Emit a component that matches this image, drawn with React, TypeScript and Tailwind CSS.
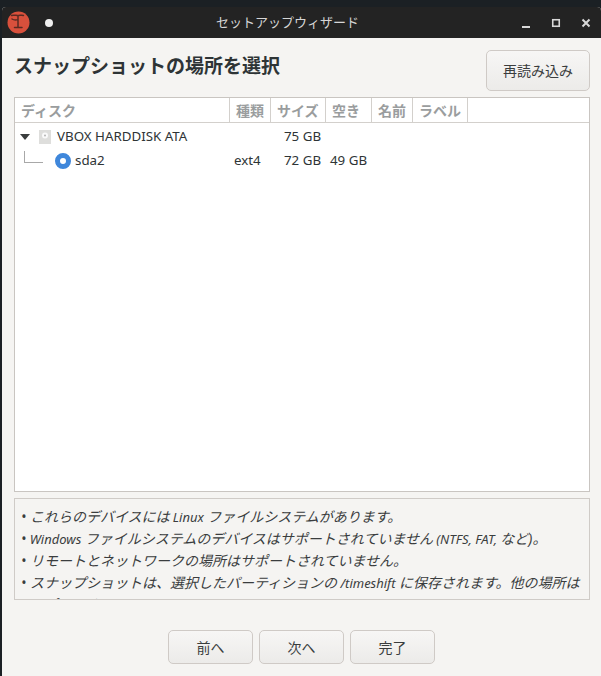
import React from "react";

const FONT = "font-['Noto_Sans','Noto_Sans_CJK_JP',sans-serif]";

const cols = [
  { label: "ディスク", w: "w-[215px]" },
  { label: "種類", w: "w-[41px]" },
  { label: "サイズ", w: "w-[55px]" },
  { label: "空き", w: "w-[46px]" },
  { label: "名前", w: "w-[41px]" },
  { label: "ラベル", w: "w-[55px]" },
];

function L({ children }: { children: React.ReactNode }) {
  return <span className="text-[13px]">{children}</span>;
}

function Line({ children, indent }: { children: React.ReactNode; indent?: boolean }) {
  return (
    <div className={`h-[22px] whitespace-nowrap leading-[22px] ${indent ? "pl-[9px]" : ""}`}>{children}</div>
  );
}

function FooterButton({ label }: { label: string }) {
  return (
    <button className="w-[85px] h-[34px] rounded-[5px] border border-[#cfcac6] bg-gradient-to-b from-[#f7f6f5] to-[#ecebe9] text-[14px] text-[#3a3d3e]">
      {label}
    </button>
  );
}

export default function App() {
  return (
    <div className={`${FONT} w-[601px] h-[676px] overflow-hidden bg-[#1b2024] pt-[7px] pl-[2px]`}>
      <div className="flex h-[669px] w-[599px] flex-col overflow-hidden rounded-t-[4px] bg-[#f5f4f2]">
        <div className="relative flex h-[31px] shrink-0 items-center bg-[#232323] pl-[5px] pr-[9px]">
          <svg width="23" height="23" viewBox="0 0 23 23" className="shrink-0">
            <circle cx="11.5" cy="11.5" r="11" fill="#d9503c" />
            <path d="M4.5 4.5c2-.8 4.5 0 6.5 0s3.5-.8 5.5 0M11 4.5v12M7.5 16.5h7.5M5 8c1.5 1 4 1.2 6 .6" stroke="#5a2a22" strokeWidth="1.5" fill="none" strokeLinecap="round" />
          </svg>
          <span className="ml-[15px] size-[8px] rounded-full bg-[#eeeeee]" />
          <span className="absolute left-[214px] top-[6px] text-[13px] leading-[19px] text-[#d6d6d6]">
            セットアップウィザード
          </span>
          <div className="ml-auto flex items-center gap-[18px] text-[#d8d8d8]">
            <svg width="12" height="12" viewBox="0 0 12 12"><rect x="2" y="9" width="8" height="2" fill="currentColor" /></svg>
            <svg width="12" height="12" viewBox="0 0 12 12"><rect x="2.75" y="2.75" width="6.5" height="6.5" fill="none" stroke="currentColor" strokeWidth="1.6" /></svg>
            <svg width="12" height="12" viewBox="0 0 12 12"><path d="M2.5 2.5l7 7M9.5 2.5l-7 7" stroke="currentColor" strokeWidth="2" /></svg>
          </div>
        </div>

        <div className="flex min-h-0 flex-1 flex-col pl-[12px] pr-[11px]">
          <div className="flex h-[53px] shrink-0 items-end justify-between">
            <h1 className="mb-[11px] text-[19px] font-bold leading-[28px] text-[#2e3436]">スナップショットの場所を選択</h1>
            <button className="h-[41px] w-[104px] rounded-[5px] border border-[#cfcac6] bg-gradient-to-b from-[#f7f6f5] to-[#ecebe9] text-[14px] text-[#3a3d3e]">
              再読み込み
            </button>
          </div>

          <div className="mt-[6px] h-[395px] shrink-0 border border-[#c9c5c1] bg-white">
            <div className="flex h-[25px] border-b border-[#d3d0cc]">
              {cols.map((c) => (
                <div key={c.label} className={`${c.w} shrink-0 border-r border-[#d3d0cc] pl-[6px] text-[14px] font-bold leading-[25px] text-[#9a9d9e]`}>
                  {c.label}
                </div>
              ))}
            </div>
            <div className="flex h-[26px] items-center pt-[2px] text-[13.33px] text-[#2e3436]">
              <div className="flex w-[219px] shrink-0 items-center">
                <svg width="10" height="6" viewBox="0 0 10 6" className="ml-[5px]"><path d="M0 0h10L5 6z" fill="#3a3d3e" /></svg>
                <svg width="12" height="14" viewBox="0 0 12 14" className="ml-[9px]">
                  <rect width="12" height="14" fill="#dededc" />
                  <circle cx="6" cy="5.5" r="3" fill="#fafafa" />
                  <circle cx="6" cy="5.5" r="1" fill="#b4b4b4" />
                </svg>
                <span className="ml-[6px]">VBOX HARDDISK ATA</span>
              </div>
              <div className="w-[50px] shrink-0" />
              <div className="shrink-0">75 GB</div>
            </div>
            <div className="flex h-[24px] items-center text-[13.33px] text-[#2e3436]">
              <div className="relative flex w-[219px] shrink-0 items-center">
                <div className="absolute left-[9px] top-0 h-[12px] w-[19px] border-b border-l border-[#a8a8a8]" />
                <span className="ml-[40px] size-[16px] rounded-full border-[5px] border-[#3f87db] bg-white" />
                <span className="ml-[4px]">sda2</span>
              </div>
              <div className="w-[50px] shrink-0">ext4</div>
              <div className="w-[46px] shrink-0">72 GB</div>
              <div className="shrink-0">49 GB</div>
            </div>
          </div>

          <div className="mt-[6px] h-[102px] shrink-0 overflow-hidden border border-[#cfcbc7] px-[6px] pt-[7px] text-[14px] italic text-[#3a3d3e]">
            <Line>• これらのデバイスには<L> Linux </L>ファイルシステムがあります。</Line>
            <Line>•<L> Windows </L>ファイルシステムのデバイスはサポートされていません<L> (NTFS, FAT, </L>など)。</Line>
            <Line>• リモートとネットワークの場所はサポートされていません。</Line>
            <Line>• スナップショットは、選択したパーティションの<L> /timeshift </L>に保存されます。他の場所は</Line>
            <Line indent>サポートされていません。</Line>
          </div>

          <div className="mt-[30px] flex shrink-0 justify-center gap-[6px] pr-[1px]">
            <FooterButton label="前へ" />
            <FooterButton label="次へ" />
            <FooterButton label="完了" />
          </div>
        </div>
      </div>
    </div>
  );
}
